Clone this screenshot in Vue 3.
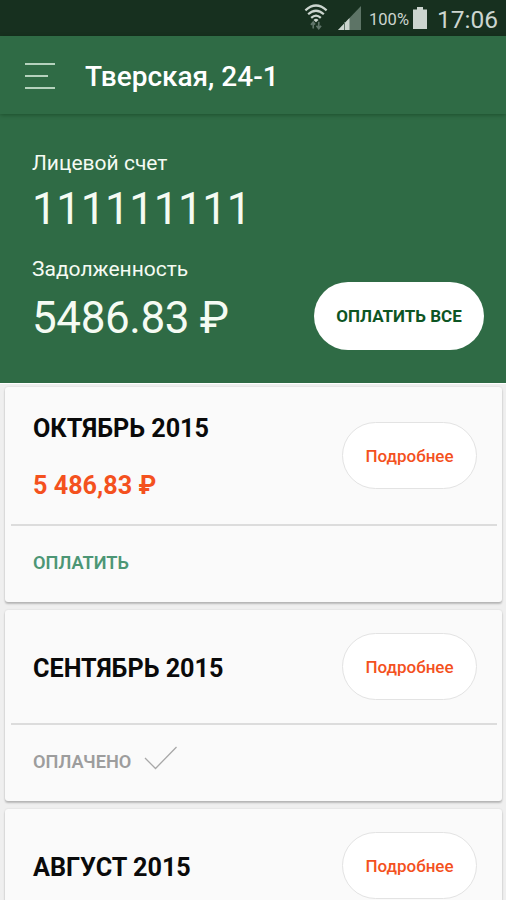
<template>
  <div class="screen">
    <div class="status-bar">
      <svg class="wifi" width="24" height="26" viewBox="0 0 26 28" preserveAspectRatio="none" fill="none">
        <g stroke="#ccd5cf" stroke-width="2.4">
          <path d="M1.500 6.800Q13 -3.500 24.500 6.800" />
          <path d="M4.500 11Q13 3.500 21.500 11" />
          <path d="M7.800 15Q13 10.200 18.200 15" />
        </g>
        <path d="M10.300 17.200Q13 14.800 15.700 17.200L13 19.600Z" fill="#ccd5cf" />
        <path d="M10 26.500V20M7.500 22.500L10 19.500L12 22M16 19V26M13.500 23.500L16 26.500L18.500 23.500" stroke="#60756a" stroke-width="1.800" />
      </svg>
      <svg class="signal" width="23" height="24" viewBox="0 0 23 24">
        <path d="M0 24L23 0V24Z" fill="#5d7466" />
        <path d="M0 24L11.500 12V24Z" fill="#ccd5cf" />
        <path d="M6.500 16V24" stroke="#5d7466" />
      </svg>
      <span class="percent">100%</span>
      <svg class="battery" width="14" height="22" viewBox="0 0 14 22">
        <path d="M4 0H10V2.500H14V22H0V2.500H4Z" fill="#ccd5cf" />
      </svg>
      <span class="clock">17:06</span>
    </div>

    <header class="toolbar">
      <button class="menu" aria-label="Меню">
        <span></span>
        <span></span>
        <span></span>
      </button>
      <h1>Тверская, 24-1</h1>
    </header>

    <section class="summary">
      <div class="label">Лицевой счет</div>
      <div class="value account">111111111</div>
      <div class="debt-row">
        <div>
          <div class="label">Задолженность</div>
          <div class="value">5486.83 ₽</div>
        </div>
        <button class="pay-all"><span>ОПЛАТИТЬ ВСЕ</span></button>
      </div>
    </section>

    <main class="bills">
      <article v-for="bill in bills" :key="bill.month" class="card">
        <div class="card-main" :class="{ unpaid: bill.amount }">
          <div class="bill-info">
            <h2>{{ bill.month }}</h2>
            <div v-if="bill.amount" class="amount">{{ bill.amount }}</div>
          </div>
          <button class="details"><span>Подробнее</span></button>
        </div>
        <div v-if="bill.status" class="card-footer">
          <span v-if="bill.status === 'due'" class="pay">ОПЛАТИТЬ</span>
          <template v-else>
            <span class="paid">ОПЛАЧЕНО</span>
            <svg class="check" width="34" height="24" viewBox="0 0 34 24" fill="none">
              <path d="M1 12L11.500 22.500L32.500 1" stroke="#a8a8a8" stroke-width="1.300" />
            </svg>
          </template>
        </div>
      </article>
    </main>
  </div>
</template>

<script setup>
const bills = [
  { month: 'ОКТЯБРЬ 2015', amount: '5 486,83 ₽', status: 'due' },
  { month: 'СЕНТЯБРЬ 2015', amount: '', status: 'paid' },
  { month: 'АВГУСТ 2015', amount: '', status: '' },
]
</script>

<style>
body {
  margin: 0;
  overflow: hidden;
}
</style>

<style scoped>
.screen {
  width: 506px;
  height: 900px;
  overflow: hidden;
  display: flex;
  flex-direction: column;
  background: #efefef;
  font-family: Roboto, 'Noto Sans', sans-serif;
}

button {
  border: 0;
  padding: 0;
  font-family: inherit;
}

.status-bar {
  flex: none;
  box-sizing: border-box;
  height: 36px;
  padding: 0 8px 0 0;
  display: flex;
  align-items: center;
  justify-content: flex-end;
  background: #17301f;
  color: #ccd5cf;
}

.wifi {
  margin: -2px 10px 0 0;
}

.signal {
  margin-right: 8px;
}

.percent {
  padding-top: 3px;
  font-size: 16.5px;
  margin-right: 4px;
}

.battery {
  margin-right: 10px;
}

.clock {
  padding-top: 3px;
  font-size: 24.5px;
}

.toolbar {
  flex: none;
  box-sizing: border-box;
  height: 78px;
  padding: 2px 25px 0;
  display: flex;
  align-items: center;
  gap: 30px;
  position: relative;
  background: #2f6b45;
  box-shadow: 0 1px 4px rgba(0, 40, 10, 0.4);
}

.menu {
  width: 30px;
  height: 26px;
  display: flex;
  flex-direction: column;
  justify-content: space-between;
  background: none;
}

.menu span {
  width: 30px;
  height: 2px;
  background: #b5d2bd;
}

.menu span:nth-child(2) {
  width: 23px;
}

h1 {
  margin: 0;
  font-size: 28px;
  font-weight: 500;
  color: #fff;
}

.summary {
  flex: none;
  box-sizing: border-box;
  height: 269px;
  padding: 37px 22px 0 32px;
  background: #2f6b45;
  color: #f5fbf3;
}

.label {
  font-size: 21px;
  line-height: 25px;
}

.value {
  font-size: 44px;
  line-height: 52px;
  margin-top: 10px;
  letter-spacing: -0.4px;
}

.account {
  margin-top: 7px;
}

.debt-row {
  display: flex;
  justify-content: space-between;
  margin-top: 22px;
}

.pay-all {
  width: 170px;
  height: 68px;
  margin-top: 25px;
  border-radius: 34px;
  background: #fff;
  color: #0d5524;
  font-size: 17px;
  font-weight: 700;
}

.bills {
  padding: 3px 4px 0 5px;
  display: flex;
  flex-direction: column;
  gap: 8px;
  border-top: 1px solid #fff;
}

.card {
  flex: none;
  border-radius: 3px;
  background: #fafafa;
  box-shadow: 0 2px 2px rgba(0, 0, 0, 0.22), 0 0 2px rgba(0, 0, 0, 0.12);
}

.card-main {
  box-sizing: border-box;
  height: 115px;
  margin: 0 5px 0 6px;
  padding: 0 20px 0 22px;
  display: flex;
  align-items: center;
  justify-content: space-between;
  border-bottom: 2px solid #dcdcdc;
}

.card-main.unpaid {
  height: 139px;
}

.bill-info {
  padding-top: 4px;
}

h2 {
  margin: 0;
  font-size: 25.2px;
  line-height: 30px;
  font-weight: 700;
  color: #0a0a0a;
}

.amount {
  margin-top: 27px;
  font-size: 25.2px;
  line-height: 30px;
  font-weight: 700;
  color: #f4511e;
}

.details {
  box-sizing: border-box;
  width: 135px;
  height: 67px;
  border: 1px solid #e3e3e3;
  border-radius: 34px;
  background: #fff;
  color: #f4511e;
  font-size: 17px;
  font-weight: 500;
}

.card-footer {
  box-sizing: border-box;
  height: 76px;
  padding: 0 0 3px 28px;
  display: flex;
  align-items: center;
  font-size: 18.2px;
  font-weight: 600;
}

.pay {
  color: #4c9675;
}

.paid {
  color: #9d9d9d;
}

.check {
  margin: -7px 0 0 13px;
}
</style>
